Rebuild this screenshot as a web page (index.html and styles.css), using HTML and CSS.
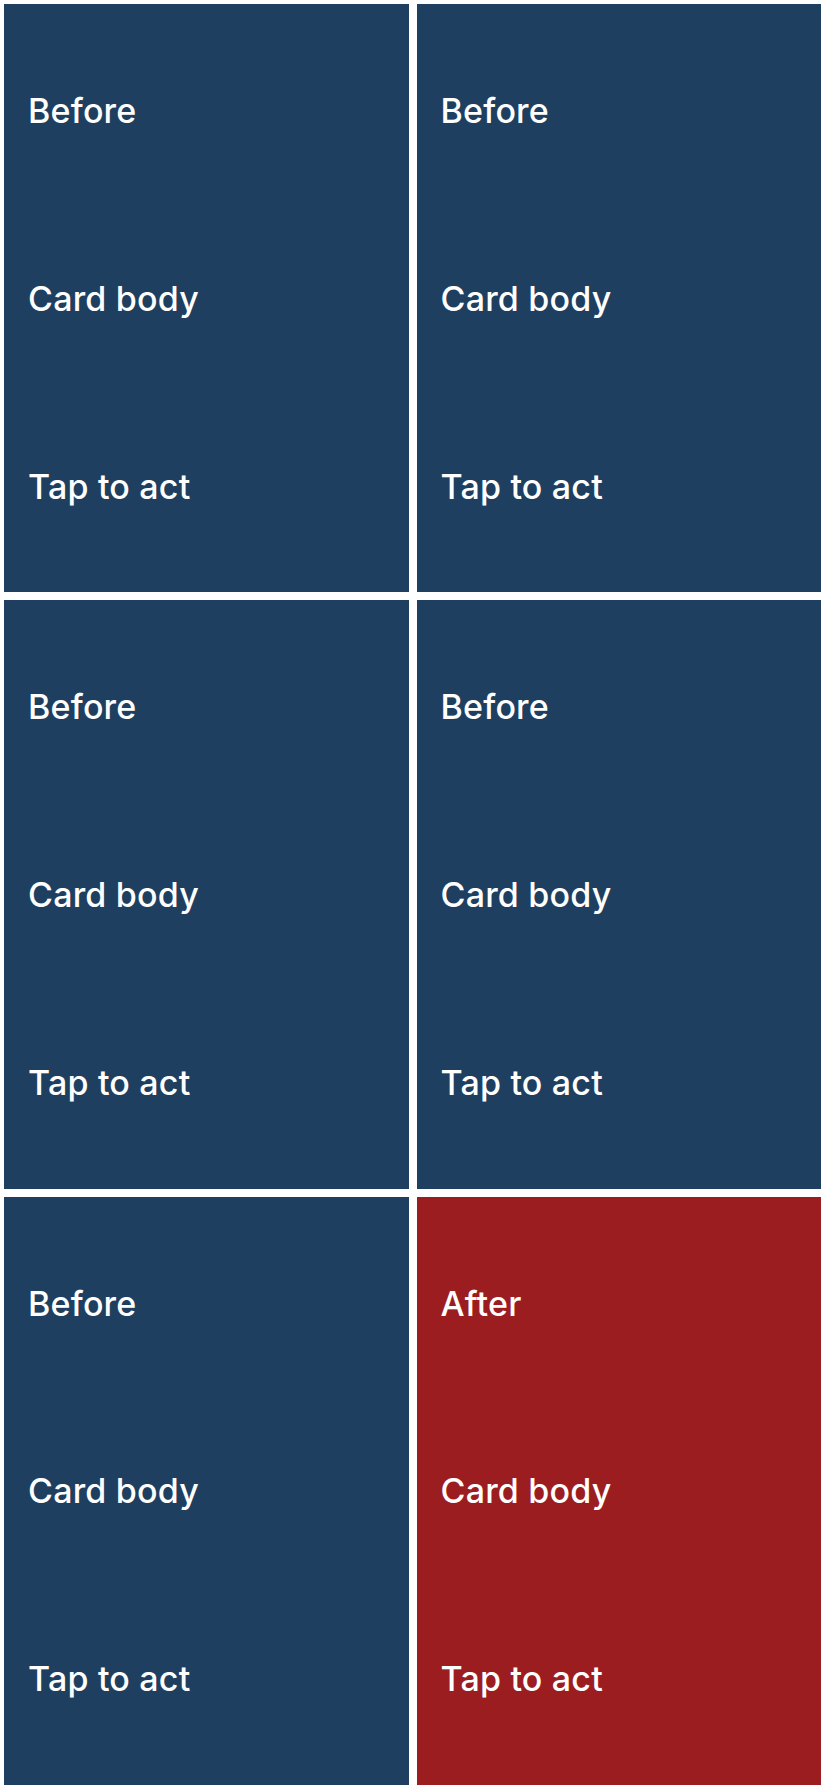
FILE: index.html
```html
<!DOCTYPE html>
<html lang="en">
<head>
    <meta charset="UTF-8">
    <meta name="viewport" content="width=device-width, initial-scale=1.0">
    <title>Cards</title>
    <link rel="stylesheet" href="styles.css">
</head>
<body>

    <!-- Grid kartu -->
    <div class="cards">
        <div class="card">
            <p>Before</p>
            <p>Card body</p>
            <p>Tap to act</p>
        </div>
        <div class="card">
            <p>Before</p>
            <p>Card body</p>
            <p>Tap to act</p>
        </div>
        <div class="card">
            <p>Before</p>
            <p>Card body</p>
            <p>Tap to act</p>
        </div>
        <div class="card">
            <p>Before</p>
            <p>Card body</p>
            <p>Tap to act</p>
        </div>
        <div class="card">
            <p>Before</p>
            <p>Card body</p>
            <p>Tap to act</p>
        </div>
        <div class="card card-after">
            <p>After</p>
            <p>Card body</p>
            <p>Tap to act</p>
        </div>
    </div>

</body>
</html>
```

FILE: styles.css
```css
  body {
      font-family: Inter, "Noto Sans", sans-serif;
      background-color: #ffffff;
      margin: 0;
      padding: 0;
  }

  /* Grid 2 kolom x 3 baris */
  .cards {
      display: grid;
      grid-template-columns: 1fr 1fr;
      grid-template-rows: repeat(3, 1fr);
      gap: 8px;
      padding: 4px;
      min-height: 100vh;
      box-sizing: border-box;
  }

  .card {
      background-color: #1f3f60;
      color: #ffffff;
      display: flex;
      flex-direction: column;
      justify-content: space-between;
      padding: 87px 24px 85px;
  }

  .card p {
      margin: 0;
      font-size: 34px;
      font-weight: 500;
      letter-spacing: 0.2px;
      line-height: 1.2;
  }

  .card-after {
      background-color: #9c1d1f;
  }
```
